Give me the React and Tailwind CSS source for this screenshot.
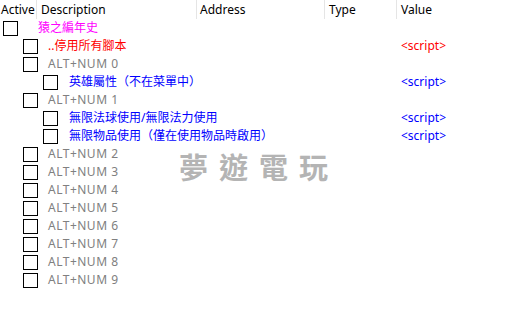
import React from 'react';

const FONT = { fontFamily: '"Noto Sans", "Noto Sans CJK TC", sans-serif' };

const COLUMNS = [
  { name: 'Active', w: 'w-[37px]', pad: 'pl-[1px]' },
  { name: 'Description', w: 'w-[160px]', pad: 'pl-[4px]' },
  { name: 'Address', w: 'w-[128px]', pad: 'pl-[3px]' },
  { name: 'Type', w: 'w-[72px]', pad: 'pl-[4px]' },
  { name: 'Value', w: 'flex-1', pad: 'pl-[4px]', last: true },
];

const ALT = 'text-[#808080] tracking-[0.5px]';

// level: tree depth, color of description, value text/colour
const ROWS = [
  { level: 0, text: '猿之編年史', color: 'text-[#ff00ff]' },
  { level: 1, text: '..停用所有腳本', color: 'text-[#ff0000]', value: '<script>', valueColor: 'text-[#ff0000]' },
  { level: 1, text: 'ALT+NUM 0', color: ALT },
  { level: 2, text: '英雄屬性（不在菜單中）', color: 'text-[#0000ff]', value: '<script>', valueColor: 'text-[#0000ff]' },
  { level: 1, text: 'ALT+NUM 1', color: ALT },
  { level: 2, text: '無限法球使用/無限法力使用', color: 'text-[#0000ff]', value: '<script>', valueColor: 'text-[#0000ff]' },
  { level: 2, text: '無限物品使用（僅在使用物品時啟用）', color: 'text-[#0000ff]', value: '<script>', valueColor: 'text-[#0000ff]' },
  ...[2, 3, 4, 5, 6, 7, 8, 9].map((n) => ({ level: 1, text: `ALT+NUM ${n}`, color: ALT })),
];

const INDENT = ['pl-[3px]', 'pl-[23px]', 'pl-[43px]'];
const GAP = ['mr-[20px]', 'mr-[10px]', 'mr-[11px]'];

function Row({ row }) {
  return (
    <div className="flex h-[18px] items-center">
      <div className={`flex w-[397px] items-center ${INDENT[row.level]}`}>
        <div className={`h-[15px] w-[15px] shrink-0 border border-black bg-white ${GAP[row.level]}`} />
        <span className={`whitespace-nowrap text-[12px] leading-[18px] ${row.color}`}>{row.text}</span>
      </div>
      {row.value && (
        <span className={`pl-[4px] text-[12px] leading-[18px] ${row.valueColor}`}>{row.value}</span>
      )}
    </div>
  );
}

export default function App() {
  return (
    <div className="relative h-[334px] w-[510px] overflow-hidden bg-white" style={FONT}>
      {/* Header */}
      <div className="flex h-[19px] items-center">
        {COLUMNS.map((c) => (
          <div
            key={c.name}
            className={`flex h-full items-center text-[12px] text-black ${c.w} ${c.pad} ${c.last ? '' : 'border-r border-[#e5e5e5]'}`}
          >
            {c.name}
          </div>
        ))}
      </div>

      {/* Tree rows */}
      <div className="flex flex-col">
        {ROWS.map((row, i) => (
          <Row key={i} row={row} />
        ))}
      </div>

      {/* Watermark */}
      <div className="pointer-events-none absolute left-[179px] top-[146px] text-[29px] font-bold tracking-[11px] text-[#b4b4b4]">
        夢遊電玩
      </div>
    </div>
  );
}
